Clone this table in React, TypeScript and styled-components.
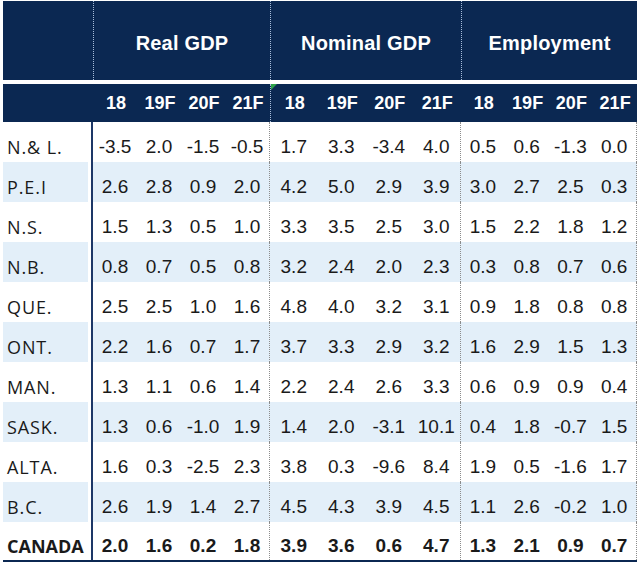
import React from 'react';
import styled, { createGlobalStyle } from 'styled-components';

const NAVY = '#0b2852';
const STRIPE = '#e3eff9';
const COLS = '90px 177px 191px 176px';

const GlobalStyle = createGlobalStyle`
  html, body {
    margin: 0;
    padding: 0;
    background: #ffffff;
  }
`;

const years = ['18', '19F', '20F', '21F'];

const rows: { label: string; data: string[] }[] = [
  { label: 'N.& L.', data: ['-3.5', '2.0', '-1.5', '-0.5', '1.7', '3.3', '-3.4', '4.0', '0.5', '0.6', '-1.3', '0.0'] },
  { label: 'P.E.I', data: ['2.6', '2.8', '0.9', '2.0', '4.2', '5.0', '2.9', '3.9', '3.0', '2.7', '2.5', '0.3'] },
  { label: 'N.S.', data: ['1.5', '1.3', '0.5', '1.0', '3.3', '3.5', '2.5', '3.0', '1.5', '2.2', '1.8', '1.2'] },
  { label: 'N.B.', data: ['0.8', '0.7', '0.5', '0.8', '3.2', '2.4', '2.0', '2.3', '0.3', '0.8', '0.7', '0.6'] },
  { label: 'QUE.', data: ['2.5', '2.5', '1.0', '1.6', '4.8', '4.0', '3.2', '3.1', '0.9', '1.8', '0.8', '0.8'] },
  { label: 'ONT.', data: ['2.2', '1.6', '0.7', '1.7', '3.7', '3.3', '2.9', '3.2', '1.6', '2.9', '1.5', '1.3'] },
  { label: 'MAN.', data: ['1.3', '1.1', '0.6', '1.4', '2.2', '2.4', '2.6', '3.3', '0.6', '0.9', '0.9', '0.4'] },
  { label: 'SASK.', data: ['1.3', '0.6', '-1.0', '1.9', '1.4', '2.0', '-3.1', '10.1', '0.4', '1.8', '-0.7', '1.5'] },
  { label: 'ALTA.', data: ['1.6', '0.3', '-2.5', '2.3', '3.8', '0.3', '-9.6', '8.4', '1.9', '0.5', '-1.6', '1.7'] },
  { label: 'B.C.', data: ['2.6', '1.9', '1.4', '2.7', '4.5', '4.3', '3.9', '4.5', '1.1', '2.6', '-0.2', '1.0'] },
  { label: 'CANADA', data: ['2.0', '1.6', '0.2', '1.8', '3.9', '3.6', '0.6', '4.7', '1.3', '2.1', '0.9', '0.7'] },
];

const titles = ['Real GDP', 'Nominal GDP', 'Employment'];

const Page = styled.div`
  padding: 1px 3px 0 3px;
  width: 634px;
  font-family: 'Liberation Sans', Arial, sans-serif;
`;

const TitleBand = styled.div`
  display: grid;
  grid-template-columns: ${COLS};
  height: 79px;
  background: ${NAVY};
  margin-bottom: 4px;
`;

const TitleCell = styled.div`
  display: flex;
  align-items: center;
  justify-content: center;
  padding-top: 5px;
  box-sizing: border-box;
  border-left: 1px dotted #a9bedb;
  color: #ffffff;
  font-size: 20px;
  font-weight: 700;
  letter-spacing: 0.2px;
`;

const YearBand = styled.div`
  display: grid;
  grid-template-columns: ${COLS};
  height: 38px;
  background: ${NAVY};
`;

const YearGroup = styled.div<{ $dotted?: boolean }>`
  position: relative;
  display: grid;
  grid-template-columns: repeat(4, 1fr);
  box-sizing: border-box;
  border-left: 1px ${(p) => (p.$dotted ? 'dotted #a9bedb' : 'solid transparent')};
`;

const Year = styled.div`
  display: flex;
  align-items: center;
  justify-content: center;
  color: #ffffff;
  font-size: 18px;
  font-weight: 700;
`;

// little green comment marker in the corner of a cell
const Marker = styled.div`
  position: absolute;
  left: 0;
  top: 0;
  width: 0;
  height: 0;
  border-top: 6px solid #2fa24a;
  border-right: 6px solid transparent;
`;

const Row = styled.div<{ $striped: boolean; $last: boolean }>`
  display: grid;
  grid-template-columns: ${COLS};
  height: 40px;
  box-sizing: border-box;
  border-bottom: ${(p) => (p.$last ? `2px solid ${NAVY}` : 'none')};
  color: #1a1a1a;
  font-weight: ${(p) => (p.$last ? 700 : 400)};
  background: ${(p) => (p.$striped ? STRIPE : '#ffffff')};
`;

const Label = styled.div<{ $bold: boolean }>`
  display: flex;
  align-items: center;
  padding: 9px 0 0 4px;
  box-sizing: border-box;
  border-right: 2px solid #1d3767;
  box-shadow: inset -3px 0 0 #ffffff;
  font-family: 'Open Sans', 'DejaVu Sans', sans-serif;
  font-size: 18px;
  letter-spacing: ${(p) => (p.$bold ? '0' : '0.9px')};
`;

const Values = styled.div`
  display: grid;
  grid-template-columns: repeat(4, 1fr);
  box-sizing: border-box;
  border-right: 1px dotted #8c8c8c;
`;

const Value = styled.div`
  display: flex;
  align-items: center;
  justify-content: center;
  padding-top: 9px;
  font-size: 19px;
`;

export default function App() {
  return (
    <Page>
      <GlobalStyle />
      <TitleBand>
        <div />
        {titles.map((t) => (
          <TitleCell key={t}>{t}</TitleCell>
        ))}
      </TitleBand>
      <YearBand>
        <div />
        {titles.map((t, g) => (
          <YearGroup key={t} $dotted={g === 1}>
            {g === 1 && <Marker />}
            {years.map((y) => (
              <Year key={y}>{y}</Year>
            ))}
          </YearGroup>
        ))}
      </YearBand>
      {rows.map((r, i) => {
        const last = i === rows.length - 1;
        return (
          <Row key={r.label} $striped={i % 2 === 1} $last={last}>
            <Label $bold={last}>{r.label}</Label>
            {[0, 1, 2].map((g) => (
              <Values key={g}>
                {r.data.slice(g * 4, g * 4 + 4).map((v, k) => (
                  <Value key={k}>{v}</Value>
                ))}
              </Values>
            ))}
          </Row>
        );
      })}
    </Page>
  );
}
